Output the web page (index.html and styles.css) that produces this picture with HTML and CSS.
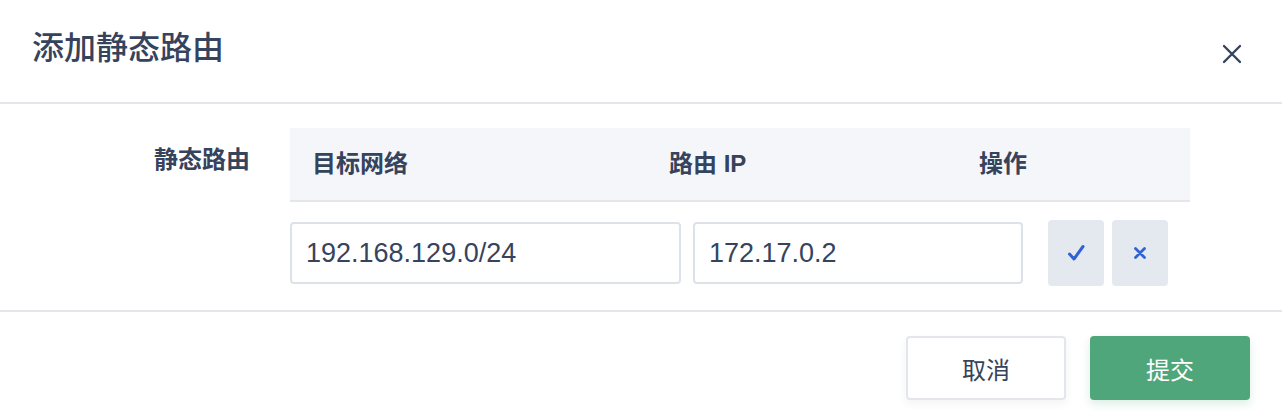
FILE: index.html
```html
<!DOCTYPE html>
<html lang="zh-CN">
<head>
<meta charset="utf-8">
<title>添加静态路由</title>
<link rel="stylesheet" href="styles.css">
</head>
<body>
<div class="modal">
  <div class="modal-header">
    <h1 class="modal-title">添加静态路由</h1>
    <button class="close-btn" type="button" aria-label="关闭">
      <svg width="20" height="20" viewBox="0 0 20 20"><path d="M2 2 L18 18 M18 2 L2 18" stroke="#36435c" stroke-width="2.4" stroke-linecap="round" fill="none"/></svg>
    </button>
  </div>
  <div class="modal-body">
    <div class="field-label">静态路由</div>
    <div class="route-table">
      <div class="table-head">
        <div class="th">目标网络</div>
        <div class="th">路由 IP</div>
        <div class="th">操作</div>
      </div>
      <div class="table-row">
        <input class="text-input input-net" type="text" value="192.168.129.0/24">
        <input class="text-input input-ip" type="text" value="172.17.0.2">
        <div class="actions">
          <button class="action-btn" type="button" aria-label="确认">
            <svg width="18" height="18" viewBox="0 0 18 18"><polyline points="2.5,10 7,15 16,2.5" stroke="#2f62d6" stroke-width="3" stroke-linecap="round" stroke-linejoin="round" fill="none"/></svg>
          </button>
          <button class="action-btn" type="button" aria-label="取消">
            <svg width="12" height="12" viewBox="0 0 12 12"><path d="M1.5 1.5 L10.5 10.5 M10.5 1.5 L1.5 10.5" stroke="#2f62d6" stroke-width="2.8" stroke-linecap="round" fill="none"/></svg>
          </button>
        </div>
      </div>
    </div>
  </div>
  <div class="modal-footer">
    <button class="btn btn-default" type="button">取消</button>
    <button class="btn btn-primary" type="button">提交</button>
  </div>
</div>
</body>
</html>
```

FILE: styles.css
```css
* {
  box-sizing: border-box;
}

html, body {
  margin: 0;
  padding: 0;
  background: #ffffff;
}

body {
  font-family: "Liberation Sans", "Noto Sans CJK SC", sans-serif;
  color: #36435c;
}

.modal {
  width: 1282px;
  height: 418px;
  background: #ffffff;
}

.modal-header {
  height: 104px;
  display: flex;
  align-items: flex-start;
  justify-content: space-between;
  padding: 0 40px 0 32px;
  border-bottom: 2px solid #e3e7ec;
}

.modal-title {
  margin: 32px 0 0 0;
  font-size: 32px;
  line-height: 32px;
  font-weight: 500;
  color: #36435c;
}

.close-btn {
  margin-top: 44px;
  width: 20px;
  height: 20px;
  padding: 0;
  border: 0;
  background: transparent;
  display: flex;
}

.modal-body {
  display: flex;
  padding: 24px 0 24px 0;
  border-bottom: 2px solid #e3e7ec;
}

.field-label {
  width: 250px;
  margin-right: 40px;
  margin-top: 20px;
  text-align: right;
  font-size: 24px;
  line-height: 24px;
  font-weight: 600;
  color: #36435c;
}

.route-table {
  width: 900px;
}

.table-head {
  height: 74px;
  display: grid;
  grid-template-columns: 357px 310px 1fr;
  align-items: center;
  padding-left: 22px;
  background: #f4f6fa;
  border-bottom: 2px solid #e3e7ec;
}

.th {
  font-size: 24px;
  line-height: 24px;
  font-weight: 600;
  color: #36435c;
}

.table-row {
  display: flex;
  align-items: center;
  padding-top: 18px;
}

.text-input {
  height: 62px;
  border: 2px solid #dde2ea;
  border-radius: 4px;
  padding: 0 14px;
  font-family: "Liberation Sans", "Noto Sans CJK SC", sans-serif;
  font-size: 27px;
  color: #36435c;
  background: #ffffff;
  outline: none;
  margin: 0;
}

.input-net {
  width: 391px;
}

.input-ip {
  width: 330px;
  margin-left: 12px;
}

.actions {
  display: flex;
  gap: 8px;
  margin-left: 25px;
}

.action-btn {
  width: 56px;
  height: 66px;
  border: 0;
  border-radius: 4px;
  background: #e4e8ef;
  display: flex;
  align-items: center;
  justify-content: center;
  padding: 0;
}

.modal-footer {
  display: flex;
  justify-content: flex-end;
  gap: 24px;
  padding: 24px 32px 0 0;
}

.btn {
  width: 160px;
  height: 64px;
  border-radius: 4px;
  font-family: "Liberation Sans", "Noto Sans CJK SC", sans-serif;
  font-size: 24px;
  padding: 0;
}

.btn-default {
  background: #ffffff;
  border: 2px solid #e3e7ec;
  color: #36435c;
  box-shadow: 0 4px 8px rgba(36, 46, 66, 0.06);
}

.btn-primary {
  background: #4fa67b;
  border: 0;
  color: #ffffff;
  box-shadow: 0 4px 10px rgba(79, 166, 123, 0.2);
}
```
